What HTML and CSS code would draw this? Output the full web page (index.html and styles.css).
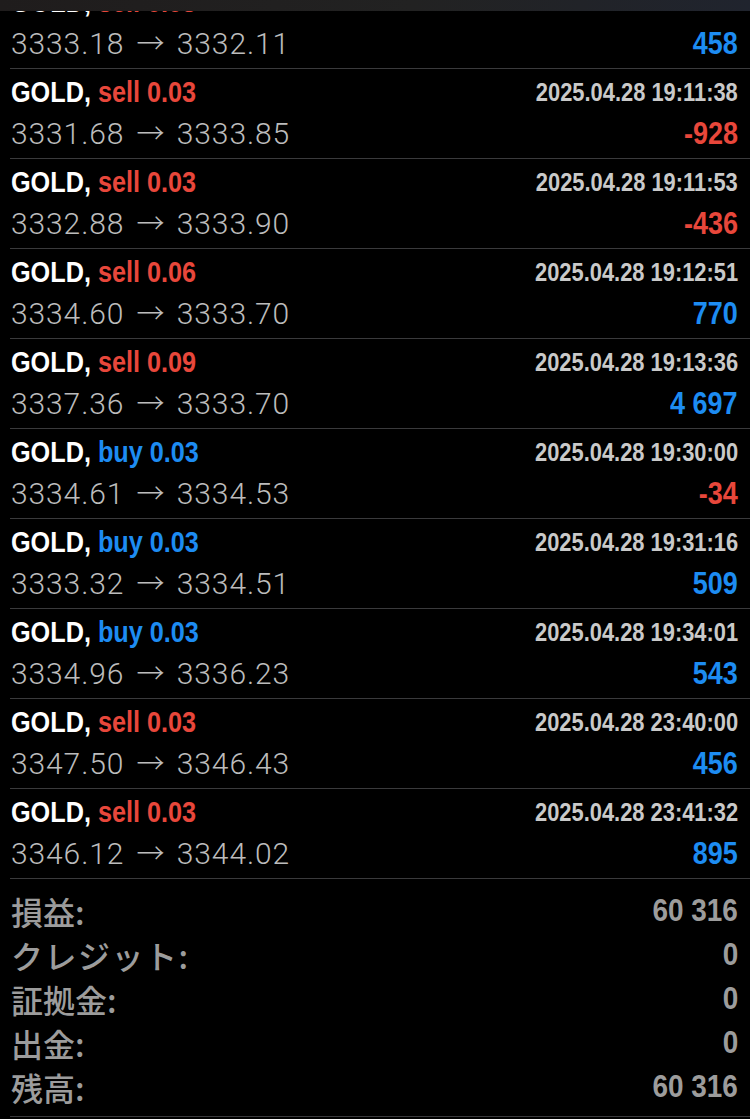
FILE: index.html
```html
<!DOCTYPE html>
<html lang="ja">
<head>
<meta charset="utf-8">
<title>History</title>
<link rel="stylesheet" href="styles.css">
</head>
<body>
<div class="topbar"></div>
<div class="clip">
  <div class="row first">
    <div class="line"><span class="title"><span class="sym">GOLD,</span> <span class="sell">sell 0.03</span></span><span class="date">2025.04.28 19:11:20</span></div>
    <div class="line"><span class="price">3333.18 <span class="arr">→</span> 3332.11</span><span class="amt pos">458</span></div>
  </div>
</div>
<main class="list">
  <div class="row">
    <div class="line"><span class="title"><span class="sym">GOLD,</span> <span class="sell">sell 0.03</span></span><span class="date">2025.04.28 19:11:38</span></div>
    <div class="line"><span class="price">3331.68 <span class="arr">→</span> 3333.85</span><span class="amt neg">-928</span></div>
  </div>
  <div class="row">
    <div class="line"><span class="title"><span class="sym">GOLD,</span> <span class="sell">sell 0.03</span></span><span class="date">2025.04.28 19:11:53</span></div>
    <div class="line"><span class="price">3332.88 <span class="arr">→</span> 3333.90</span><span class="amt neg">-436</span></div>
  </div>
  <div class="row">
    <div class="line"><span class="title"><span class="sym">GOLD,</span> <span class="sell">sell 0.06</span></span><span class="date">2025.04.28 19:12:51</span></div>
    <div class="line"><span class="price">3334.60 <span class="arr">→</span> 3333.70</span><span class="amt pos">770</span></div>
  </div>
  <div class="row">
    <div class="line"><span class="title"><span class="sym">GOLD,</span> <span class="sell">sell 0.09</span></span><span class="date">2025.04.28 19:13:36</span></div>
    <div class="line"><span class="price">3337.36 <span class="arr">→</span> 3333.70</span><span class="amt pos">4 697</span></div>
  </div>
  <div class="row">
    <div class="line"><span class="title"><span class="sym">GOLD,</span> <span class="buy">buy 0.03</span></span><span class="date">2025.04.28 19:30:00</span></div>
    <div class="line"><span class="price">3334.61 <span class="arr">→</span> 3334.53</span><span class="amt neg">-34</span></div>
  </div>
  <div class="row">
    <div class="line"><span class="title"><span class="sym">GOLD,</span> <span class="buy">buy 0.03</span></span><span class="date">2025.04.28 19:31:16</span></div>
    <div class="line"><span class="price">3333.32 <span class="arr">→</span> 3334.51</span><span class="amt pos">509</span></div>
  </div>
  <div class="row">
    <div class="line"><span class="title"><span class="sym">GOLD,</span> <span class="buy">buy 0.03</span></span><span class="date">2025.04.28 19:34:01</span></div>
    <div class="line"><span class="price">3334.96 <span class="arr">→</span> 3336.23</span><span class="amt pos">543</span></div>
  </div>
  <div class="row">
    <div class="line"><span class="title"><span class="sym">GOLD,</span> <span class="sell">sell 0.03</span></span><span class="date">2025.04.28 23:40:00</span></div>
    <div class="line"><span class="price">3347.50 <span class="arr">→</span> 3346.43</span><span class="amt pos">456</span></div>
  </div>
  <div class="row">
    <div class="line"><span class="title"><span class="sym">GOLD,</span> <span class="sell">sell 0.03</span></span><span class="date">2025.04.28 23:41:32</span></div>
    <div class="line"><span class="price">3346.12 <span class="arr">→</span> 3344.02</span><span class="amt pos">895</span></div>
  </div>
</main>
<section class="summary">
  <div class="srow"><span class="label">損益:</span><span class="val">60 316</span></div>
  <div class="srow"><span class="label kana">クレジット:</span><span class="val">0</span></div>
  <div class="srow"><span class="label">証拠金:</span><span class="val">0</span></div>
  <div class="srow"><span class="label">出金:</span><span class="val">0</span></div>
  <div class="srow"><span class="label">残高:</span><span class="val">60 316</span></div>
</section>
</body>
</html>
```

FILE: styles.css
```css
html, body {
  margin: 0;
  padding: 0;
  background: #000;
  overflow: hidden;
}
body {
  font-family: "Liberation Sans", Arial, sans-serif;
}
.topbar {
  height: 11px;
  background: linear-gradient(90deg, #1f1c1c 0%, #222222 55%, #20242e 100%);
}
.clip {
  height: 58px;
  overflow: hidden;
  margin-left: 10px;
}
.row.first {
  margin-top: -32px;
}
.list {
  padding-left: 10px;
}
.row {
  border-bottom: 1px solid #3a3a3c;
  padding: 3px 12px 4px 1px;
  height: 82px;
}
.line {
  display: flex;
  justify-content: space-between;
  align-items: center;
  height: 41px;
}
.title {
  display: inline-block;
  font-weight: bold;
  font-size: 29px;
  transform: scaleX(0.87);
  transform-origin: left center;
  white-space: nowrap;
}
.sym { color: #fff; }
.sell { color: #e8473b; }
.buy { color: #1d8cf2; }
.date {
  display: inline-block;
  font-weight: bold;
  font-size: 25px;
  color: #c9c9c9;
  transform: scaleX(0.875);
  transform-origin: right center;
  white-space: nowrap;
}
.price {
  font-family: Roboto, "Liberation Sans", sans-serif;
  font-weight: 300;
  font-size: 30px;
  line-height: 36px;
  letter-spacing: 0.9px;
  color: #bcbcbc;
  white-space: nowrap;
}
.arr {
  font-family: "Noto Sans CJK JP", sans-serif;
  font-weight: 300;
  font-size: 28px;
  line-height: 1;
  letter-spacing: 0;
  color: #bcbcbc;
  margin: 0 4px;
}
.amt {
  display: inline-block;
  font-weight: bold;
  font-size: 31px;
  transform: scaleX(0.87);
  transform-origin: right center;
  white-space: nowrap;
}
.pos { color: #1d8cf2; }
.neg { color: #e8473b; }
.summary {
  margin-left: 10px;
  padding: 10px 12px 7px 1px;
  border-bottom: 1px solid #3a3a3c;
}
.srow {
  display: flex;
  justify-content: space-between;
  align-items: center;
  height: 44px;
}
.label {
  font-family: "Noto Sans CJK JP", sans-serif;
  font-weight: 500;
  font-size: 32px;
  color: #9c9c9c;
}
.label.kana {
  letter-spacing: 1.5px;
}
.val {
  display: inline-block;
  font-weight: bold;
  font-size: 31px;
  color: #9c9c9c;
  transform: scaleX(0.9);
  transform-origin: right center;
  white-space: nowrap;
}
```
